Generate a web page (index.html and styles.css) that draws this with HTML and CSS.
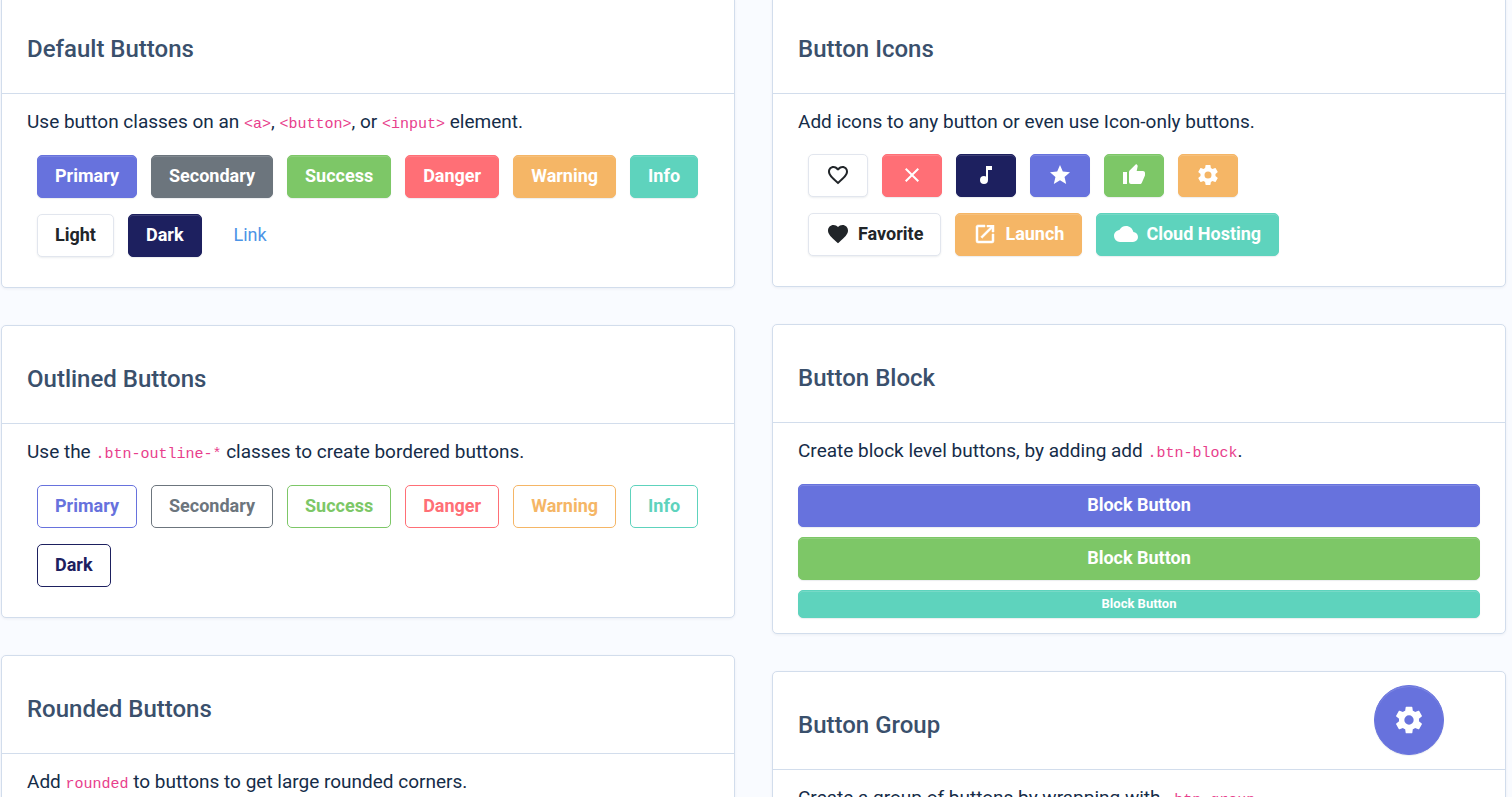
FILE: index.html
```html
<!DOCTYPE html>
<html lang="en">
<head>
    <meta charset="UTF-8">
    <meta name="viewport" content="width=device-width, initial-scale=1.0">
    <title>Buttons</title>
    <link rel="stylesheet" href="styles.css">
</head>
<body>
    <main class="page">
        <div class="column">
            <!-- Default buttons -->
            <section class="card">
                <div class="card-header">
                    <h2>Default Buttons</h2>
                </div>
                <div class="card-body">
                    <p>Use button classes on an <code>&lt;a&gt;</code>, <code>&lt;button&gt;</code>, or <code>&lt;input&gt;</code> element.</p>
                    <div class="btn-list">
                        <button type="button" class="btn btn-primary">Primary</button>
                        <button type="button" class="btn btn-secondary">Secondary</button>
                        <button type="button" class="btn btn-success">Success</button>
                        <button type="button" class="btn btn-danger">Danger</button>
                        <button type="button" class="btn btn-warning">Warning</button>
                        <button type="button" class="btn btn-info">Info</button>
                        <button type="button" class="btn btn-light">Light</button>
                        <button type="button" class="btn btn-dark">Dark</button>
                        <a href="#" class="btn btn-link">Link</a>
                    </div>
                </div>
            </section>

            <!-- Outlined buttons -->
            <section class="card">
                <div class="card-header">
                    <h2>Outlined Buttons</h2>
                </div>
                <div class="card-body">
                    <p>Use the <code>.btn-outline-*</code> classes to create bordered buttons.</p>
                    <div class="btn-list">
                        <button type="button" class="btn btn-outline-primary">Primary</button>
                        <button type="button" class="btn btn-outline-secondary">Secondary</button>
                        <button type="button" class="btn btn-outline-success">Success</button>
                        <button type="button" class="btn btn-outline-danger">Danger</button>
                        <button type="button" class="btn btn-outline-warning">Warning</button>
                        <button type="button" class="btn btn-outline-info">Info</button>
                        <button type="button" class="btn btn-outline-dark">Dark</button>
                    </div>
                </div>
            </section>

            <!-- Rounded buttons -->
            <section class="card">
                <div class="card-header">
                    <h2>Rounded Buttons</h2>
                </div>
                <div class="card-body">
                    <p>Add <code>rounded</code> to buttons to get large rounded corners.</p>
                </div>
            </section>
        </div>

        <div class="column">
            <!-- Button icons -->
            <section class="card">
                <div class="card-header">
                    <h2>Button Icons</h2>
                </div>
                <div class="card-body">
                    <p>Add icons to any button or even use Icon-only buttons.</p>
                    <div class="btn-list">
                        <button type="button" class="btn btn-light" aria-label="Favorite">
                            <svg class="icon" viewBox="0 0 24 24"><path d="M12.1,18.55L12,18.65L11.89,18.55C7.14,14.24 4,11.39 4,8.5C4,6.5 5.5,5 7.5,5C9.04,5 10.54,6 11.07,7.36H12.93C13.46,6 14.96,5 16.5,5C18.5,5 20,6.5 20,8.5C20,11.39 16.86,14.24 12.1,18.55M16.5,3C14.76,3 13.09,3.81 12,5.08C10.91,3.81 9.24,3 7.5,3C4.42,3 2,5.41 2,8.5C2,12.27 5.4,15.36 10.55,20.03L12,21.35L13.45,20.03C18.6,15.36 22,12.27 22,8.5C22,5.41 19.58,3 16.5,3Z"/></svg>
                        </button>
                        <button type="button" class="btn btn-danger" aria-label="Close">
                            <svg class="icon" viewBox="0 0 24 24"><path d="M19,6.41L17.59,5L12,10.59L6.41,5L5,6.41L10.59,12L5,17.59L6.41,19L12,13.41L17.59,19L19,17.59L13.41,12L19,6.41Z"/></svg>
                        </button>
                        <button type="button" class="btn btn-dark" aria-label="Music">
                            <svg class="icon" viewBox="0 0 24 24"><path d="M12,3V13.55C11.41,13.21 10.73,13 10,13A4,4 0 0,0 6,17A4,4 0 0,0 10,21A4,4 0 0,0 14,17V7H18V3H12Z"/></svg>
                        </button>
                        <button type="button" class="btn btn-primary" aria-label="Star">
                            <svg class="icon" viewBox="0 0 24 24"><path d="M12,17.27L18.18,21L16.54,13.97L22,9.24L14.81,8.62L12,2L9.19,8.62L2,9.24L7.45,13.97L5.82,21L12,17.27Z"/></svg>
                        </button>
                        <button type="button" class="btn btn-success" aria-label="Like">
                            <svg class="icon" viewBox="0 0 24 24"><path d="M23,10C23,8.89 22.1,8 21,8H14.68L15.64,3.43C15.66,3.33 15.67,3.22 15.67,3.11C15.67,2.7 15.5,2.32 15.23,2.05L14.17,1L7.59,7.58C7.22,7.95 7,8.45 7,9V19A2,2 0 0,0 9,21H18C18.83,21 19.54,20.5 19.84,19.78L22.86,12.73C22.95,12.5 23,12.26 23,12V10M1,21H5V9H1V21Z"/></svg>
                        </button>
                        <button type="button" class="btn btn-warning" aria-label="Settings">
                            <svg class="icon" viewBox="0 0 24 24"><path d="M12,15.5A3.5,3.5 0 0,1 8.5,12A3.5,3.5 0 0,1 12,8.5A3.5,3.5 0 0,1 15.5,12A3.5,3.5 0 0,1 12,15.5M19.43,12.97C19.47,12.65 19.5,12.33 19.5,12C19.5,11.67 19.47,11.34 19.43,11L21.54,9.37C21.73,9.22 21.78,8.95 21.66,8.73L19.66,5.27C19.54,5.05 19.27,4.96 19.05,5.05L16.56,6.05C16.04,5.66 15.5,5.32 14.87,5.07L14.5,2.42C14.46,2.18 14.25,2 14,2H10C9.75,2 9.54,2.18 9.5,2.42L9.13,5.07C8.5,5.32 7.96,5.66 7.44,6.05L4.95,5.05C4.73,4.96 4.46,5.05 4.34,5.27L2.34,8.73C2.21,8.95 2.27,9.22 2.46,9.37L4.57,11C4.53,11.34 4.5,11.67 4.5,12C4.5,12.33 4.53,12.65 4.57,12.97L2.46,14.63C2.27,14.78 2.21,15.05 2.34,15.27L4.34,18.73C4.46,18.95 4.73,19.03 4.95,18.95L7.44,17.94C7.96,18.34 8.5,18.68 9.13,18.93L9.5,21.58C9.54,21.82 9.75,22 10,22H14C14.25,22 14.46,21.82 14.5,21.58L14.87,18.93C15.5,18.67 16.04,18.34 16.56,17.94L19.05,18.95C19.27,19.03 19.54,18.95 19.66,18.73L21.66,15.27C21.78,15.05 21.73,14.78 21.54,14.63L19.43,12.97Z"/></svg>
                        </button>
                    </div>
                    <div class="btn-list">
                        <button type="button" class="btn btn-light">
                            <svg class="icon" viewBox="0 0 24 24"><path d="M12,21.35L10.55,20.03C5.4,15.36 2,12.27 2,8.5C2,5.41 4.42,3 7.5,3C9.24,3 10.91,3.81 12,5.08C13.09,3.81 14.76,3 16.5,3C19.58,3 22,5.41 22,8.5C22,12.27 18.6,15.36 13.45,20.03L12,21.35Z"/></svg>
                            Favorite
                        </button>
                        <button type="button" class="btn btn-warning">
                            <svg class="icon icon-bold" viewBox="0 0 24 24"><path d="M14,3V5H17.59L7.76,14.83L9.17,16.24L19,6.41V10H21V3M19,19H5V5H12V3H5C3.89,3 3,3.9 3,5V19A2,2 0 0,0 5,21H19A2,2 0 0,0 21,19V12H19V19Z"/></svg>
                            Launch
                        </button>
                        <button type="button" class="btn btn-info">
                            <svg class="icon" viewBox="0 0 24 24"><path d="M19.35,10.03C18.67,6.59 15.64,4 12,4C9.11,4 6.6,5.64 5.35,8.03C2.34,8.36 0,10.9 0,14A6,6 0 0,0 6,20H19A5,5 0 0,0 24,15C24,12.36 21.95,10.22 19.35,10.03Z"/></svg>
                            Cloud Hosting
                        </button>
                    </div>
                </div>
            </section>

            <!-- Block buttons -->
            <section class="card">
                <div class="card-header">
                    <h2>Button Block</h2>
                </div>
                <div class="card-body">
                    <p>Create block level buttons, by adding add <code>.btn-block</code>.</p>
                    <div class="btn-stack">
                        <button type="button" class="btn btn-primary">Block Button</button>
                        <button type="button" class="btn btn-success">Block Button</button>
                        <button type="button" class="btn btn-sm btn-info">Block Button</button>
                    </div>
                </div>
            </section>

            <!-- Button group -->
            <section class="card">
                <div class="card-header">
                    <h2>Button Group</h2>
                </div>
                <div class="card-body">
                    <p>Create a group of buttons by wrapping with <code>.btn-group</code></p>
                </div>
            </section>
        </div>
    </main>

    <button type="button" class="btn btn-primary settings-toggle" aria-label="Open settings">
        <svg class="icon" viewBox="0 0 24 24"><path d="M12,15.5A3.5,3.5 0 0,1 8.5,12A3.5,3.5 0 0,1 12,8.5A3.5,3.5 0 0,1 15.5,12A3.5,3.5 0 0,1 12,15.5M19.43,12.97C19.47,12.65 19.5,12.33 19.5,12C19.5,11.67 19.47,11.34 19.43,11L21.54,9.37C21.73,9.22 21.78,8.95 21.66,8.73L19.66,5.27C19.54,5.05 19.27,4.96 19.05,5.05L16.56,6.05C16.04,5.66 15.5,5.32 14.87,5.07L14.5,2.42C14.46,2.18 14.25,2 14,2H10C9.75,2 9.54,2.18 9.5,2.42L9.13,5.07C8.5,5.32 7.96,5.66 7.44,6.05L4.95,5.05C4.73,4.96 4.46,5.05 4.34,5.27L2.34,8.73C2.21,8.95 2.27,9.22 2.46,9.37L4.57,11C4.53,11.34 4.5,11.67 4.5,12C4.5,12.33 4.53,12.65 4.57,12.97L2.46,14.63C2.27,14.78 2.21,15.05 2.34,15.27L4.34,18.73C4.46,18.95 4.73,19.03 4.95,18.95L7.44,17.94C7.96,18.34 8.5,18.68 9.13,18.93L9.5,21.58C9.54,21.82 9.75,22 10,22H14C14.25,22 14.46,21.82 14.5,21.58L14.87,18.93C15.5,18.67 16.04,18.34 16.56,17.94L19.05,18.95C19.27,19.03 19.54,18.95 19.66,18.73L21.66,15.27C21.78,15.05 21.73,14.78 21.54,14.63L19.43,12.97Z"/></svg>
    </button>
</body>
</html>
```
FILE: styles.css
```css
* {
    margin: 0;
    padding: 0;
    box-sizing: border-box;
}

html {
    height: 100%;
}

body {
    height: 100%;
    overflow: hidden;
    background: #f9fbff;
    color: #152c48;
    font-family: Roboto, sans-serif;
    font-size: 19px;
    line-height: 28px;
}

.page {
    display: grid;
    grid-template-columns: 1fr 1fr;
    gap: 37px;
    margin-top: -5px;
    padding: 0 6px 0 1px;
}

.column {
    display: flex;
    flex-direction: column;
    gap: 37px;
}

/* Cards */
.card {
    background: #fff;
    border: 1px solid #d2ddec;
    border-radius: 5px;
    box-shadow: 0 1px 3px rgba(18, 38, 63, 0.06);
}

.card-header {
    padding: 38px 25px 29px;
    border-bottom: 1px solid #d2ddec;
}

.card-header h2 {
    color: #3a506c;
    font-size: 24px;
    font-weight: 500;
    line-height: 30px;
}

.card-body {
    padding: 14px 25px 15px;
}

.card-body p {
    margin-bottom: 18px;
}

code {
    color: #e83e8c;
    font-family: "Liberation Mono", monospace;
    font-size: 15px;
    line-height: 24px;
}

/* Buttons */
.btn-list {
    display: flex;
    flex-wrap: wrap;
    gap: 16px 14px;
    padding-left: 10px;
    margin-bottom: 15px;
}

.btn-list + .btn-list {
    margin-top: 16px;
}

.btn-list:has(+ .btn-list) {
    margin-bottom: 0;
}

.btn-stack {
    display: flex;
    flex-direction: column;
    gap: 10px;
}

.btn {
    display: inline-flex;
    align-items: center;
    justify-content: center;
    gap: 8px;
    min-height: 43px;
    padding: 6px 17px 8px;
    border: 1px solid transparent;
    border-radius: 5px;
    background: transparent;
    font-family: inherit;
    font-size: 18px;
    font-weight: 700;
    line-height: 27px;
    text-decoration: none;
    cursor: pointer;
}

.btn-sm {
    min-height: 28px;
    padding: 4px 10px;
    font-size: 13px;
    line-height: 18px;
}

.icon {
    width: 24px;
    height: 24px;
    fill: currentColor;
}

.icon-bold {
    stroke: currentColor;
    stroke-width: 0.5;
}

.btn-primary,
.btn-secondary,
.btn-success,
.btn-danger,
.btn-warning,
.btn-info,
.btn-dark {
    color: #fff;
    box-shadow: inset 0 1px 0 rgba(255, 255, 255, 0.15), 0 1px 1px rgba(18, 38, 63, 0.08);
}

.btn-primary {
    background: #6772dd;
    border-color: #6772dd;
}

.btn-secondary {
    background: #6c757d;
    border-color: #6c757d;
}

.btn-success {
    background: #7dc767;
    border-color: #7dc767;
}

.btn-danger {
    background: #ff6f76;
    border-color: #ff6f76;
}

.btn-warning {
    background: #f5b666;
    border-color: #f5b666;
}

.btn-info {
    background: #5ed3bd;
    border-color: #5ed3bd;
}

.btn-dark {
    background: #1d205f;
    border-color: #1d205f;
}

.btn-light {
    color: #212529;
    background: #fff;
    border-color: #e2e6ee;
    box-shadow: 0 1px 2px rgba(18, 38, 63, 0.08);
}

.btn-link {
    color: #4d94e6;
    font-weight: 400;
}

.btn-outline-primary {
    color: #6772dd;
    border-color: #6772dd;
}

.btn-outline-secondary {
    color: #6c757d;
    border-color: #6c757d;
}

.btn-outline-success {
    color: #7dc767;
    border-color: #7dc767;
}

.btn-outline-danger {
    color: #ff6f76;
    border-color: #ff6f76;
}

.btn-outline-warning {
    color: #f5b666;
    border-color: #f5b666;
}

.btn-outline-info {
    color: #5ed3bd;
    border-color: #5ed3bd;
}

.btn-outline-dark {
    color: #1d205f;
    border-color: #1d205f;
}

/* Floating settings button */
.settings-toggle {
    position: fixed;
    right: 68px;
    bottom: 42px;
    width: 70px;
    height: 70px;
    padding: 0;
    border-radius: 50%;
}

.settings-toggle .icon {
    width: 32px;
    height: 32px;
    flex: none;
}
```
